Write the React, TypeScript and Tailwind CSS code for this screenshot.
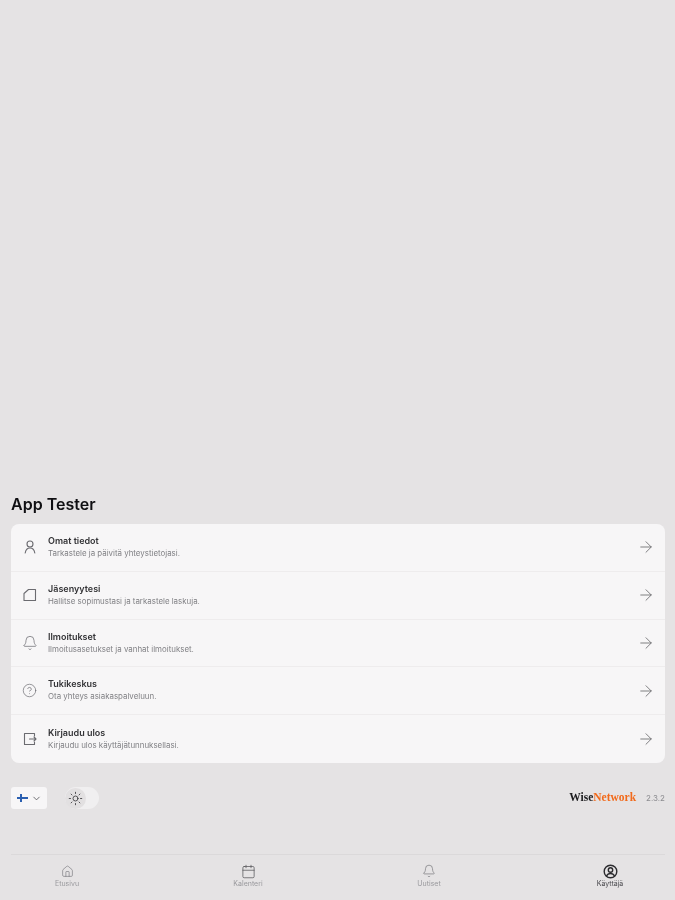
import React from 'react';
import { ArrowRight, Bell, Calendar, ChevronDown, CircleHelp, House, Sun } from 'lucide-react';

const FONT = "font-['Inter','Liberation_Sans',sans-serif]";

const UserIcon: React.FC = () => (
  <svg width="16" height="16" viewBox="0 0 16 16" fill="none" stroke="#6b6b70" strokeWidth="1.1" strokeLinecap="round">
    <circle cx="8" cy="5" r="3" />
    <path d="M3.200 14c.5-3 2.400-5 4.800-5s4.300 2 4.800 5" />
  </svg>
);

// Jäsenyytesi-rivin kortti, jonka kulma on leikattu
const CardIcon: React.FC = () => (
  <svg width="16" height="16" viewBox="0 0 16 16" fill="none" stroke="#6b6b70" strokeWidth="1.1" strokeLinejoin="round">
    <path d="M6.500 2.500h7v11h-11.500v-7z" />
  </svg>
);

const ExitIcon: React.FC = () => (
  <svg width="16" height="16" viewBox="0 0 16 16" fill="none" stroke="#6b6b70" strokeWidth="1.1" strokeLinecap="round" strokeLinejoin="round">
    <path d="M12.500 5V2.500H2.500v11h10V11" />
    <path d="M7.500 8h6.500M12 6l2 2-2 2" />
  </svg>
);

const UserCircleIcon: React.FC = () => (
  <svg width="15" height="15" viewBox="0 0 15 15" fill="none" stroke="#2b2b2e" strokeWidth="1.400">
    <circle cx="7.500" cy="7.500" r="6.300" />
    <circle cx="7.500" cy="6" r="2.200" />
    <path d="M3.500 12c.8-1.700 2.200-2.500 4-2.500s3.200.8 4 2.500" />
  </svg>
);

const rows = [
  { title: 'Omat tiedot', text: 'Tarkastele ja päivitä yhteystietojasi.', icon: <UserIcon /> },
  { title: 'Jäsenyytesi', text: 'Hallitse sopimustasi ja tarkastele laskuja.', icon: <CardIcon /> },
  { title: 'Ilmoitukset', text: 'Ilmoitusasetukset ja vanhat ilmoitukset.', icon: <Bell size={16} strokeWidth={1.1} color="#6b6b70" /> },
  { title: 'Tukikeskus', text: 'Ota yhteys asiakaspalveluun.', icon: <CircleHelp size={15} strokeWidth={1.1} color="#6b6b70" /> },
  { title: 'Kirjaudu ulos', text: 'Kirjaudu ulos käyttäjätunnuksellasi.', icon: <ExitIcon /> },
];

const tabs = [
  { label: 'Etusivu', icon: <House size={13} strokeWidth={1.2} color="#77777b" />, active: false },
  { label: 'Kalenteri', icon: <Calendar size={15} strokeWidth={1.2} color="#55555a" />, active: false },
  { label: 'Uutiset', icon: <Bell size={14} strokeWidth={1.2} color="#77777b" />, active: false },
  { label: 'Käyttäjä', icon: <UserCircleIcon />, active: true },
];

export default function App() {
  return (
    <div className={`h-[900px] bg-[#e5e3e4] flex flex-col justify-end overflow-hidden blur-[0.4px] ${FONT}`}>
      <div className="pl-[11px] pr-[10px]">
        <h1 className="text-[16px] leading-[24px] font-semibold text-[#0f0f12] mb-2">App Tester</h1>
        <div className="bg-[#f7f6f7] rounded-[8px] divide-y divide-[#eeeced]">
          {rows.map((row) => (
            <div key={row.title} className="h-[47.8px] flex items-center pl-[10px] pr-[10px]">
              <div className="w-[17px] flex justify-center shrink-0">{row.icon}</div>
              <div className="ml-[10px] flex-1">
                <p className="text-[9px] leading-[12px] font-semibold text-[#333336]">{row.title}</p>
                <p className="text-[7.9px] leading-[13px] text-[#818185]">{row.text}</p>
              </div>
              <ArrowRight size={18} strokeWidth={1.1} color="#66666a" />
            </div>
          ))}
        </div>
        <div className="flex items-center mt-[24px] h-[22px]">
          <div className="w-[36px] h-[22px] bg-[#f7f6f7] rounded-[3px] flex items-center justify-center gap-[3px]">
            <svg width="11" height="8" viewBox="0 0 11 8">
              <rect width="11" height="8" fill="#f7f6f7" />
              <rect y="3" width="11" height="2" fill="#2a5fb0" />
              <rect x="3" width="2" height="8" fill="#2a5fb0" />
            </svg>
            <ChevronDown size={11} strokeWidth={1.8} color="#55555a" />
          </div>
          <div className="ml-[18px] w-[34px] h-[22px] bg-[#f0eff0] rounded-full flex items-center">
            <div className="w-[21px] h-[21px] rounded-full bg-[#e2e0e1] flex items-center justify-center">
              <Sun size={15} strokeWidth={1.3} color="#333336" />
            </div>
          </div>
          <div className="ml-auto flex items-center gap-[10px]">
            <span className="text-[11.5px] leading-none font-bold font-['Liberation_Serif',serif]">
              <span className="text-[#1c1c1e]">Wise</span>
              <span className="text-[#f26a1b]">Network</span>
            </span>
            <span className="text-[8px] leading-none text-[#8c8c90]">2.3.2</span>
          </div>
        </div>
        <div className="mt-[45px] border-t border-[#dbd9da] h-[46px] flex justify-between pl-[31px] pr-[30px]">
          {tabs.map((tab) => (
            <div key={tab.label} className="w-[50px] flex flex-col items-center pt-[8px]">
              <div className="h-[16px] flex items-center">{tab.icon}</div>
              <span className={`text-[7px] leading-[10px] ${tab.active ? 'text-[#4b4b4f]' : 'text-[#99999d]'}`}>{tab.label}</span>
            </div>
          ))}
        </div>
      </div>
    </div>
  );
}
